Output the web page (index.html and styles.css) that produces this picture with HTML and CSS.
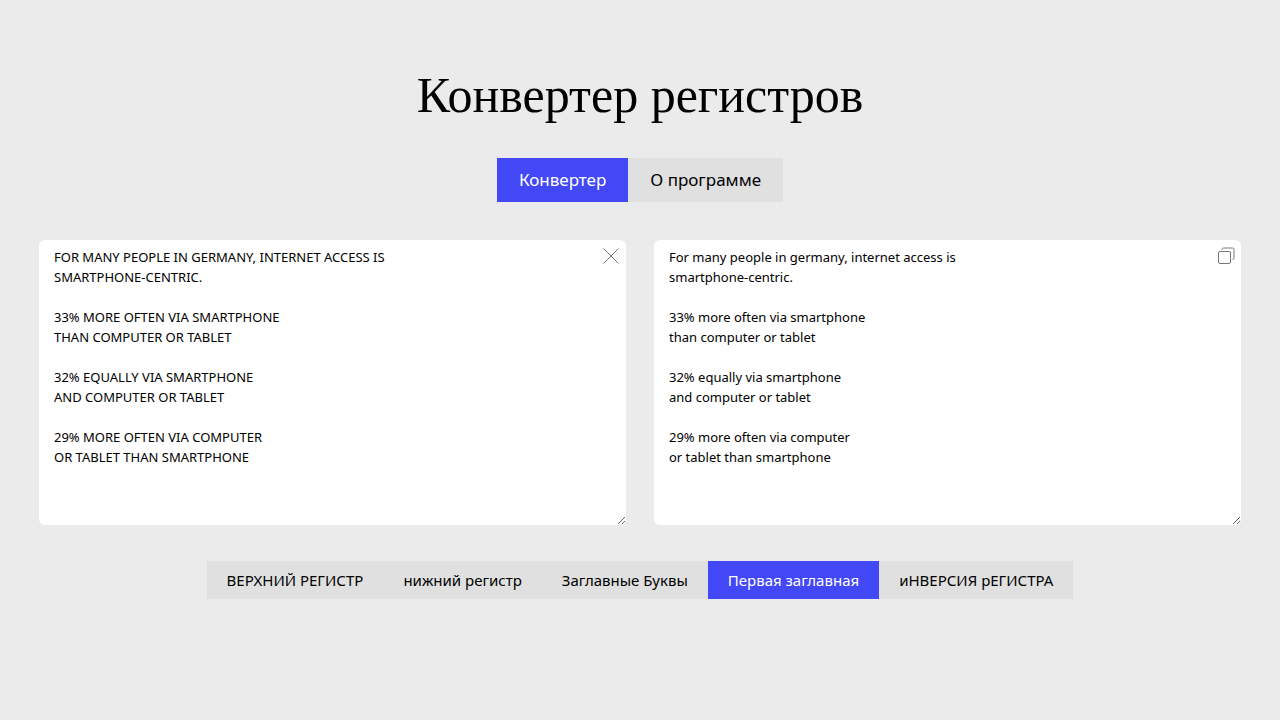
FILE: index.html
```
<!DOCTYPE html>
<html lang="ru">
<head>
<meta charset="utf-8">
<meta name="viewport" content="width=device-width, initial-scale=1">
<title>Конвертер регистров</title>
<link rel="stylesheet" href="styles.css">
</head>
<body>
<main class="page">
<h1 class="title">Конвертер регистров</h1>
<nav class="tabs" aria-label="Разделы">
<button class="tab active" type="button">Конвертер</button>
<button class="tab" type="button">О программе</button>
</nav>
<section class="editors">
<div class="editor">
<textarea class="text" aria-label="Исходный текст" spellcheck="false">FOR MANY PEOPLE IN GERMANY, INTERNET ACCESS IS
SMARTPHONE-CENTRIC.

33% MORE OFTEN VIA SMARTPHONE
THAN COMPUTER OR TABLET

32% EQUALLY VIA SMARTPHONE
AND COMPUTER OR TABLET

29% MORE OFTEN VIA COMPUTER
OR TABLET THAN SMARTPHONE</textarea>
<button class="tool" type="button" aria-label="Очистить"><svg class="icon" viewBox="0 0 18 18" aria-hidden="true"><path d="M1.500 1.500l15 15M16.500 1.500l-15 15"/></svg></button>
</div>
<div class="editor">
<textarea class="text" aria-label="Результат" spellcheck="false">For many people in germany, internet access is
smartphone-centric.

33% more often via smartphone
than computer or tablet

32% equally via smartphone
and computer or tablet

29% more often via computer
or tablet than smartphone</textarea>
<button class="tool" type="button" aria-label="Скопировать"><svg class="icon" viewBox="0 0 18 18" aria-hidden="true"><rect x="1.500" y="4.500" width="12" height="12" rx="1.500"/><path d="M5 3V2.500Q5 1 6.500 1H15.500Q17 1 17 2.500V11Q17 12.500 15.500 12.500"/></svg></button>
</div>
</section>
<div class="modes" role="group" aria-label="Регистр">
<button class="mode" type="button">ВЕРХНИЙ РЕГИСТР</button>
<button class="mode" type="button">нижний регистр</button>
<button class="mode" type="button">Заглавные Буквы</button>
<button class="mode active" type="button">Первая заглавная</button>
<button class="mode" type="button">иНВЕРСИЯ рЕГИСТРА</button>
</div>
</main>
</body>
</html>
```
FILE: styles.css
```
* { box-sizing: border-box; }
body { margin: 0; background: #ebebeb; color: #000; font-family: "Noto Sans", sans-serif; }
button, textarea { font-family: inherit; color: inherit; }
button { border: 0; margin: 0; cursor: pointer; }
.page { display: flex; flex-direction: column; align-items: center; padding: 65px 39px 40px; }
.title { margin: 0 0 33px; font: 400 50px/60px "Liberation Serif", serif; }
.tabs, .modes { display: flex; justify-content: center; flex-wrap: wrap; background: #e0e0e0; }
.tab { padding: 0 22px; font-size: 17px; line-height: 44px; background: none; }
.mode { padding: 0 20px; font-size: 15px; line-height: 38px; background: none; }
.active { background: #4248f5; color: #fff; }
.editors { display: grid; grid-template-columns: 1fr 1fr; gap: 28px; width: 100%; margin: 38px 0 36px; }
.editor { position: relative; }
.text { display: block; width: 100%; height: 285px; padding: 7px 48px 7px 15px; border: 0; border-radius: 6px; background: #fff; font-size: 13px; line-height: 20px; resize: both; }
.tool { position: absolute; top: 6px; right: 5px; width: 20px; height: 20px; padding: 1px; background: none; }
.icon { display: block; width: 18px; height: 18px; fill: none; stroke: #777; }
```
